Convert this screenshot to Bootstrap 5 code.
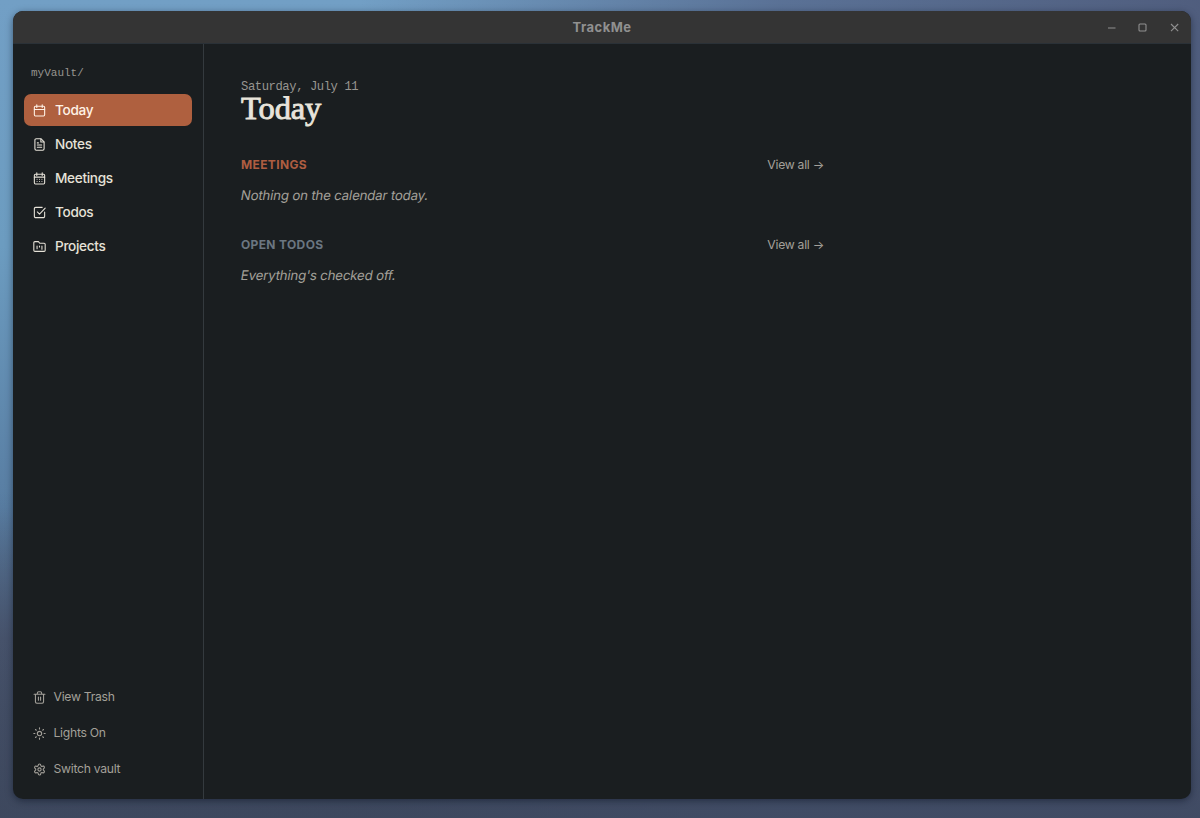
<!DOCTYPE html>
<html lang="en">
<head>
<meta charset="utf-8">
<title>TrackMe</title>
<link href="https://cdn.jsdelivr.net/npm/bootstrap@5.3.0/dist/css/bootstrap.min.css" rel="stylesheet">
<style>
  body {
    font-family: Inter, sans-serif;
    padding: 11px 9px 19px 13px;
    background:
      linear-gradient(180deg, transparent 60%, rgba(60, 70, 92, .75) 100%),
      linear-gradient(90deg, transparent 30%, rgba(82, 98, 134, .75) 65%, rgba(78, 90, 122, .95) 100%),
      linear-gradient(180deg, #729fc5 0, #6c9cc0 30%, #587da2 62%, #4b5872 78%, #465269 90%, #414d63 100%);
    color: #e8e4da;
  }
  .app-window { background: #1a1e20; border-radius: 10px; box-shadow: 0 2px 7px rgba(10, 18, 34, .5); }
  .titlebar { height: 33px; background: #343434; border-bottom: 1px solid #2a3137; color: #909090; font-size: 13px; letter-spacing: .45px; display: grid; grid-template-columns: 1fr auto 1fr; }
  .titlebar svg { width: 11px; height: 11px; }
  .window-name { padding-top: 2px; }
  .win-controls { gap: 20.4px; padding-right: 11.5px; }
  .sidebar { width: 191px; border-right: 1px solid #343a3e; padding: 20px 11px 12px; }
  .mono-text { font-family: "Liberation Mono", monospace; color: #979590; }
  .vault { font-size: 11px; line-height: 18px; padding-left: 7px; margin-bottom: 12px; }
  .sidebar svg { width: 13px; height: 13px; fill: none; stroke: currentColor; stroke-width: 2; stroke-linecap: round; stroke-linejoin: round; flex: none; }
  .main-nav { gap: 2px; }
  .main-nav .nav-link { height: 32px; padding: 0 9px; gap: 9px; font-size: 13.6px; letter-spacing: -.32px; font-weight: 500; color: #e6e2d8; border-radius: 7px; }
  .main-nav .nav-link.active { background: #af603f; color: #fff2e6; }
  .foot-nav .nav-link { height: 36px; padding: 0 9px; gap: 7.5px; font-size: 12.2px; letter-spacing: -.28px; color: #a3a099; }
  .foot-nav svg { stroke-width: 2; }
  .content { padding: 34px 37px; }
  .sheet { width: 583px; }
  .date { font-size: 12.2px; letter-spacing: -.42px; line-height: 18px; }
  h1 { font-family: "Liberation Serif", serif; font-size: 32.5px; line-height: 32px; margin: -4px 0 0; font-weight: 400; -webkit-text-stroke: .9px currentColor; letter-spacing: -.1px; }
  .block { height: 80px; }
  .blocks { padding-top: 31px; }
  h2 { font-size: 12px; line-height: 20px; font-weight: 700; letter-spacing: .35px; margin: 0; }
  .meet { color: #ae5d41; }
  .todo { color: #6b7681; }
  .view-all { font-size: 12.2px; letter-spacing: -.28px; line-height: 20px; color: #a3a099; }
  .empty { font-size: 13.3px; line-height: 20px; letter-spacing: -.2px; color: #a3a099; margin: 10px 0 0; width: fit-content; transform: skewX(-10deg); }
</style>
</head>
<body class="vh-100 overflow-hidden">
<div class="app-window h-100 d-flex flex-column overflow-hidden">
  <header class="titlebar align-items-center flex-shrink-0">
    <span></span>
    <span class="window-name fw-bold">TrackMe</span>
    <div class="win-controls d-flex align-items-center justify-content-end">
      <svg viewBox="0 0 11 11" stroke="currentColor" fill="none"><path d="M2 6h7.5"/></svg>
      <svg viewBox="0 0 11 11" stroke="currentColor" fill="none" stroke-width="1.1"><rect x="2" y="2" width="7" height="7" rx="1"/></svg>
      <svg viewBox="0 0 11 11" stroke="currentColor" fill="none" stroke-width="1.1"><path d="M2 2l7.2 7.2M9.2 2L2 9.2"/></svg>
    </div>
  </header>
  <div class="d-flex flex-grow-1">
    <aside class="sidebar d-flex flex-column flex-shrink-0">
      <div class="vault mono-text">myVault/</div>
      <nav class="main-nav nav flex-column">
        <a class="nav-link active d-flex align-items-center" href="#">
          <svg viewBox="0 0 24 24"><rect x="2.5" y="4" width="19" height="18" rx="2"/><path d="M7 1.5v5M17 1.5v5M2.5 10h19"/></svg>Today</a>
        <a class="nav-link d-flex align-items-center" href="#">
          <svg viewBox="0 0 24 24"><path d="M15 1.5H6a2.5 2.5 0 0 0-2.500 2.500v16A2.500 2.500 0 0 0 6 22.500h12a2.500 2.500 0 0 0 2.500-2.500V7z"/><path d="M14.500 2v5.500H20M8 9h2M8 13h8M8 17h8"/></svg>Notes</a>
        <a class="nav-link d-flex align-items-center" href="#">
          <svg viewBox="0 0 24 24"><rect x="2.500" y="4" width="19" height="18" rx="2"/><path d="M7 1.500v5M17 1.500v5M2.500 9.500h19M7.500 13.500h.01M12 13.500h.01M16.500 13.500h.01M7.500 17.500h.01M12 17.500h.01M16.500 17.500h.01"/></svg>Meetings</a>
        <a class="nav-link d-flex align-items-center" href="#">
          <svg viewBox="0 0 24 24"><path d="M21.500 11v8a2.500 2.500 0 0 1-2.500 2.500H5A2.500 2.500 0 0 1 2.500 19V5A2.500 2.500 0 0 1 5 2.500h12"/><path d="M8 11l4 4L22.500 4"/></svg>Todos</a>
        <a class="nav-link d-flex align-items-center" href="#">
          <svg viewBox="0 0 24 24"><path d="M3.500 21h17a2 2 0 0 0 2-2V8a2 2 0 0 0-2-2h-8l-2.500-3H3.500a2 2 0 0 0-2 2v14a2 2 0 0 0 2 2z"/><path d="M7.500 11v5M12 11v2M16.500 11v6"/></svg>Projects</a>
      </nav>
      <nav class="foot-nav nav flex-column mt-auto">
        <a class="nav-link d-flex align-items-center" href="#">
          <svg viewBox="0 0 24 24"><path d="M2 6h20M19.500 6v14a2.500 2.500 0 0 1-2.500 2.500H7A2.500 2.500 0 0 1 4.500 20V6M8 6V4a2.500 2.500 0 0 1 2.500-2.500h3A2.500 2.500 0 0 1 16 4v2M10 11v6M14 11v6"/></svg>View Trash</a>
        <a class="nav-link d-flex align-items-center" href="#">
          <svg viewBox="0 0 24 24"><circle cx="12" cy="12" r="4"/><path d="M12 1.500v2M12 20.500v2M4.600 4.600L6 6M18 18l1.400 1.400M1.500 12h2M20.500 12h2M6 18l-1.400 1.400M19.400 4.600L18 6"/></svg>Lights On</a>
        <a class="nav-link d-flex align-items-center" href="#">
          <svg viewBox="0 0 24 24"><path d="M9.700 4.100a2.300 2.300 0 0 1 4.600 0 2.300 2.300 0 0 0 3.300 1.900 2.300 2.300 0 0 1 2.300 4 2.300 2.300 0 0 0 0 3.900 2.300 2.300 0 0 1-2.300 4 2.300 2.300 0 0 0-3.300 1.900 2.300 2.300 0 0 1-4.600 0 2.300 2.300 0 0 0-3.300-1.900 2.300 2.300 0 0 1-2.300-4 2.300 2.300 0 0 0 0-3.900 2.300 2.300 0 0 1 2.300-4 2.300 2.300 0 0 0 3.300-1.900z"/><circle cx="12" cy="12" r="3"/></svg>Switch vault</a>
      </nav>
    </aside>
    <main class="content flex-grow-1">
      <div class="sheet">
        <div class="date mono-text">Saturday, July 11</div>
        <h1>Today</h1>
        <div class="blocks">
          <section class="block">
            <div class="d-flex justify-content-between"><h2 class="meet">MEETINGS</h2><a class="view-all text-decoration-none" href="#">View all →</a></div>
            <p class="empty">Nothing on the calendar today.</p>
          </section>
          <section class="block">
            <div class="d-flex justify-content-between"><h2 class="todo">OPEN TODOS</h2><a class="view-all text-decoration-none" href="#">View all →</a></div>
            <p class="empty">Everything's checked off.</p>
          </section>
        </div>
      </div>
    </main>
  </div>
</div>
<script src="https://cdn.jsdelivr.net/npm/bootstrap@5.3.0/dist/js/bootstrap.bundle.min.js"></script>
</body>
</html>
